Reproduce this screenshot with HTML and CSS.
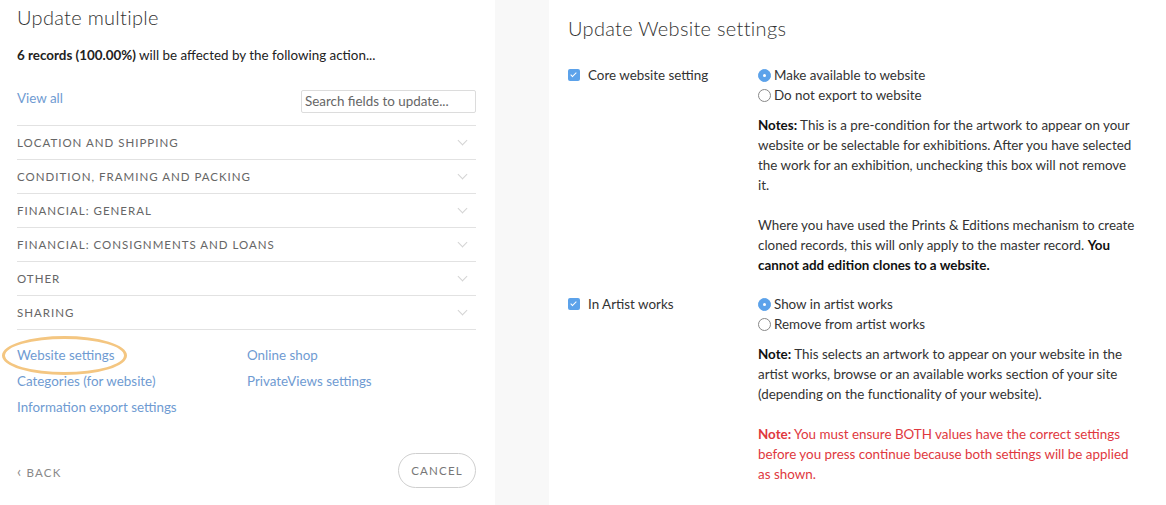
FILE: index.html
```html
<!DOCTYPE html>
<html>
	<head>
		<meta charset="utf-8" />
		<title>Update multiple</title>
		<link rel="stylesheet" href="styles.css">
	</head>
	<body>
		<div class="page">
			<div class="left">
				<h1 class="title">Update multiple</h1>
				<p class="affected"><b>6 records (100.00%)</b> will be affected by the following action...</p>
				<div class="tools">
					<a href="" class="link">View all</a>
					<input type="text" class="search" placeholder="Search fields to update..." />
				</div>
				<ul class="acc">
					<li><span>LOCATION AND SHIPPING</span><i class="chev"></i></li>
					<li><span>CONDITION, FRAMING AND PACKING</span><i class="chev"></i></li>
					<li><span>FINANCIAL: GENERAL</span><i class="chev"></i></li>
					<li><span>FINANCIAL: CONSIGNMENTS AND LOANS</span><i class="chev"></i></li>
					<li><span>OTHER</span><i class="chev"></i></li>
					<li><span>SHARING</span><i class="chev"></i></li>
				</ul>
				<div class="links">
					<a href="" class="link ring">Website settings</a>
					<a href="" class="link">Online shop</a>
					<a href="" class="link">Categories (for website)</a>
					<a href="" class="link">PrivateViews settings</a>
					<a href="" class="link">Information export settings</a>
				</div>
				<div class="foot">
					<a href="" class="back"><span class="arr">&lsaquo;</span> BACK</a>
					<button class="cancel">CANCEL</button>
				</div>
			</div>
			<div class="right">
				<h2 class="title2">Update Website settings</h2>
				<div class="row">
					<label class="opt"><i class="cb"></i>Core website setting</label>
					<div class="body">
						<div class="radio"><i class="rd on"></i>Make available to website</div>
						<div class="radio"><i class="rd"></i>Do not export to website</div>
						<p class="note"><b>Notes:</b> This is a pre-condition for the artwork to appear on your website or be selectable for exhibitions. After you have selected the work for an exhibition, unchecking this box will not remove it.</p>
						<p class="note">Where you have used the Prints &amp; Editions mechanism to create cloned records, this will only apply to the master record. <b>You cannot add edition clones to a website.</b></p>
					</div>
				</div>
				<div class="row">
					<label class="opt"><i class="cb"></i>In Artist works</label>
					<div class="body">
						<div class="radio"><i class="rd on"></i>Show in artist works</div>
						<div class="radio"><i class="rd"></i>Remove from artist works</div>
						<p class="note"><b>Note:</b> This selects an artwork to appear on your website in the artist works, browse or an available works section of your site (depending on the functionality of your website).</p>
						<p class="note red"><b>Note:</b> You must ensure BOTH values have the correct settings before you press continue because both settings will be applied as shown.</p>
					</div>
				</div>
			</div>
		</div>
	</body>
</html>
```

FILE: styles.css
```css
body,ul,li,p,h1,h2{
	margin: 0;
	padding: 0;
}
body{
	background: #f8f8f8;
	font-family: Lato, "Open Sans", sans-serif;
	font-size: 13.4px;
	color: #333;
}
li{
	list-style: none;
}
a{
	text-decoration: none;
}
.page{
	display: flex;
	gap: 54px;
	height: 505px;
}
.left{
	width: 495px;
	box-sizing: border-box;
	background: white;
	padding: 0 19px 0 17px;
}
.title{
	font-size: 20px;
	font-weight: 300;
	line-height: 24px;
	margin-top: 5px;
	color: #333;
	letter-spacing: 0.3px;
}
.affected{
	margin-top: 17px;
	line-height: 18px;
	color: #222;
}
.affected b{
	font-weight: 700;
}
.tools{
	display: flex;
	justify-content: space-between;
	align-items: center;
	margin-top: 25px;
	height: 24px;
}
.link{
	color: #6f9bd2;
	font-size: 13.4px;
}
.tools .link{
	margin-top: -6px;
}
.search{
	width: 175px;
	height: 23px;
	box-sizing: border-box;
	border: 1px solid #dcdcdc;
	border-radius: 2px;
	padding: 0 3px;
	font-family: Lato, sans-serif;
	font-size: 13.4px;
	outline: none;
}
.search::placeholder{
	color: #666;
}
.acc{
	margin-top: 12px;
	border-top: 1px solid #e2e2e2;
}
.acc li{
	height: 33px;
	border-bottom: 1px solid #e2e2e2;
	display: flex;
	align-items: center;
	justify-content: space-between;
	font-size: 11.5px;
	letter-spacing: 1px;
	color: #666;
}
.chev{
	width: 6px;
	height: 6px;
	border-right: 1px solid #d4d4d4;
	border-bottom: 1px solid #d4d4d4;
	transform: rotate(45deg);
	margin: -4px 10px 0 0;
}
.links{
	display: grid;
	grid-template-columns: 230px 230px;
	row-gap: 10px;
	margin-top: 17px;
	line-height: 16px;
}
.ring{
	position: relative;
	justify-self: start;
}
.ring::after{
	content: "";
	position: absolute;
	left: -15px;
	right: -13px;
	top: -11px;
	bottom: -12px;
	border: 3px solid #f4c681;
	border-radius: 50%;
}
.foot{
	display: flex;
	justify-content: space-between;
	align-items: center;
	margin-top: 38px;
}
.back{
	color: #888;
	font-size: 11.5px;
	letter-spacing: 1.2px;
}
.arr{
	font-size: 15px;
}
.cancel{
	width: 78px;
	height: 35px;
	border: 1px solid #cfcfcf;
	border-radius: 18px;
	background: white;
	color: #777;
	font-family: Lato, sans-serif;
	font-size: 11.5px;
	letter-spacing: 1.2px;
}
.right{
	flex: 1;
	background: white;
	padding: 0 19px;
}
.title2{
	font-size: 20px;
	font-weight: 300;
	line-height: 24px;
	margin-top: 16px;
	color: #333;
	letter-spacing: 0.3px;
}
.row{
	display: grid;
	grid-template-columns: 190px 1fr;
	line-height: 20px;
}
.row + .row{
	margin-top: 19px;
}
.title2 + .row{
	margin-top: 25px;
}
.opt{
	display: flex;
	align-items: center;
	height: 20px;
}
.cb{
	width: 12px;
	height: 12px;
	border-radius: 2px;
	background: #5ca2ea;
	margin-right: 8px;
	position: relative;
}
.cb::after{
	content: "";
	position: absolute;
	left: 4px;
	top: 2px;
	width: 2px;
	height: 5px;
	border-right: 1.5px solid white;
	border-bottom: 1.5px solid white;
	transform: rotate(45deg);
}
.body{
	width: 380px;
}
.radio{
	display: flex;
	align-items: center;
}
.rd{
	width: 11px;
	height: 11px;
	border: 1px solid #888;
	border-radius: 50%;
	margin-right: 3px;
	box-sizing: content-box;
}
.rd.on{
	border-color: #5ca2ea;
	background: #5ca2ea;
	position: relative;
}
.rd.on::after{
	content: "";
	position: absolute;
	left: 4px;
	top: 4px;
	width: 3px;
	height: 3px;
	border-radius: 50%;
	background: white;
}
.note{
	margin-top: 10px;
}
.note + .note{
	margin-top: 20px;
}
.note b{
	color: #111;
}
.red, .red b{
	color: #e0383e;
}
```
